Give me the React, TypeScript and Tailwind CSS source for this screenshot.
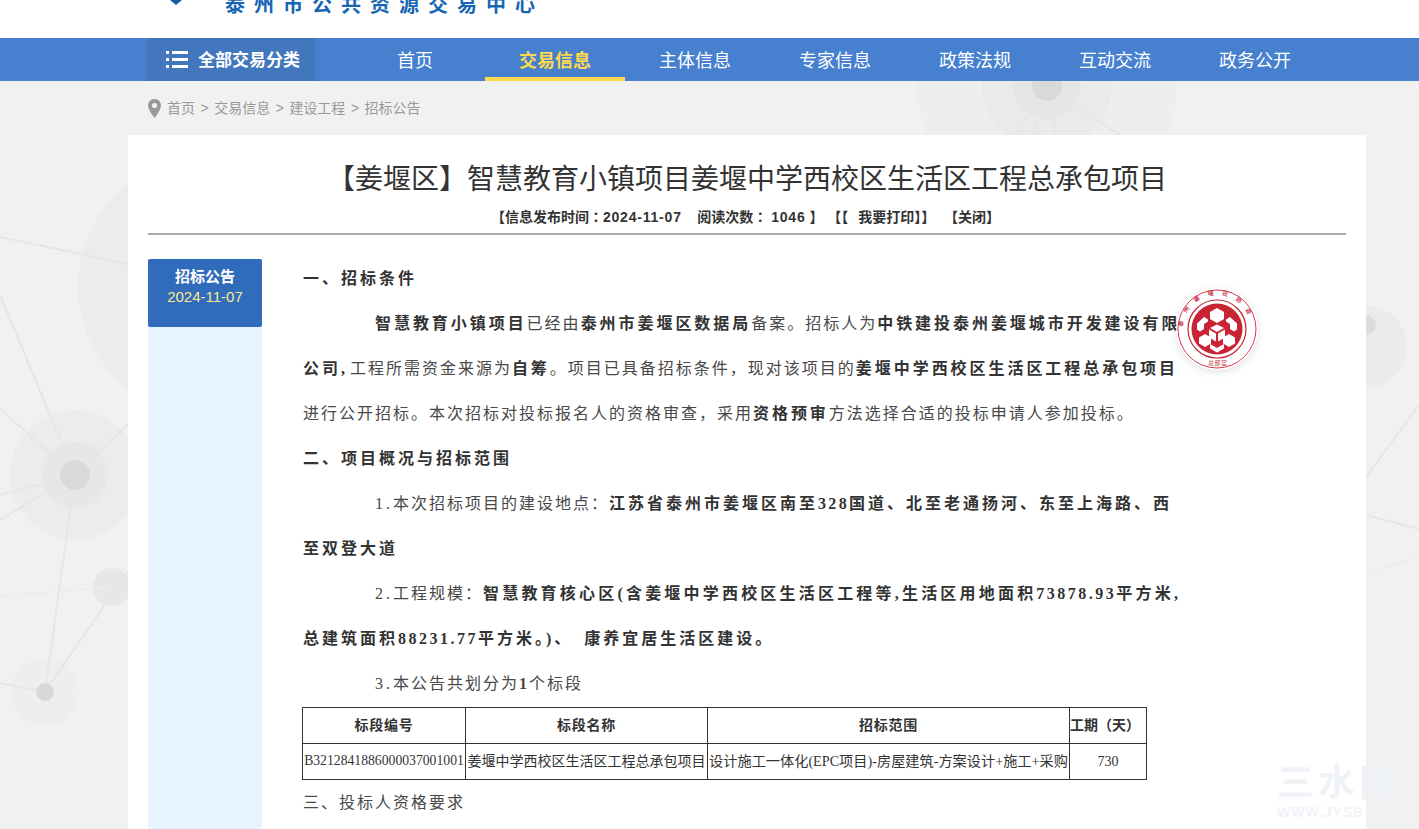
import * as React from 'react';

const font = "font-['Liberation_Sans','Noto_Sans_CJK_SC',sans-serif]";

const navItems = ['首页', '交易信息', '主体信息', '专家信息', '政策法规', '互动交流', '政务公开'];

function NetworkBg() {
  return (
    <svg className="absolute inset-0 h-full w-full" viewBox="0 0 1419 829">
      <circle cx="210" cy="286" r="132" fill="#ececec" />
      <circle cx="75" cy="475" r="65" fill="#ececec" />
      <circle cx="75" cy="475" r="33" fill="#e7e7e7" />
      <circle cx="112" cy="587" r="19" fill="#e7e7e7" />
      <circle cx="45" cy="692" r="34" fill="#eeeeee" />
      <circle cx="1047" cy="85" r="130" fill="#eeeeee" />
      <circle cx="1047" cy="85" r="65" fill="#eaeaea" />
      <circle cx="1047" cy="85" r="34" fill="#e6e6e6" />
      <circle cx="1366" cy="347" r="41" fill="#ebebeb" />
      <g stroke="#e6e6e6" strokeWidth="2" fill="none">
        <path d="M0 237 L128 264" />
        <path d="M0 295 L75 475 L128 424" />
        <path d="M0 409 L75 475 L0 495" />
        <path d="M0 520 L75 475 L45 692 L0 683" />
        <path d="M45 692 L128 571" />
        <path d="M1047 88 L1015 135" />
        <path d="M1047 88 L1033 135" />
        <path d="M1047 88 L1056 135" />
        <path d="M1047 88 L1120 135" />
        <path d="M1366 477 L1419 405" />
        <path d="M1366 515 L1419 529" />
      </g>
      <path d="M0 596 L112 587" stroke="#ececec" strokeWidth="1.500" />
      <path d="M1366 572 L1419 558" stroke="#ececec" strokeWidth="1.500" />
      <circle cx="75" cy="475" r="15" fill="#d9d9d9" />
      <circle cx="45" cy="692" r="9" fill="#d8d8d8" />
      <circle cx="1047" cy="86" r="15" fill="#d9d9d9" />
      <circle cx="1366" cy="325" r="10" fill="#dcdcdc" />
    </svg>
  );
}

function Seal() {
  return (
    <svg viewBox="0 0 82 82" className="h-[82px] w-[82px] rounded-full bg-white/50 shadow-[0_2px_8px_rgba(0,0,0,0.12)]">
      <defs>
        <path id="seal-top" d="M7 41 A34 34 0 0 1 75 41" />
      </defs>
      <circle cx="41" cy="41" r="39" fill="none" stroke="#d33a48" strokeWidth="1" />
      <text fontSize="6" fontWeight="700" fill="#c9394a" letterSpacing="8">
        <textPath href="#seal-top" startOffset="2">泰州姜堰区协会</textPath>
      </text>
      <text fontSize="6" fill="#c9394a" x="32" y="76.500" letterSpacing="0.500">总部室</text>
      <circle cx="41" cy="41" r="29" fill="#fff" stroke="#c82535" strokeWidth="1.200" />
      <circle cx="41" cy="41" r="25.500" fill="#c92433" />
      <g fill="#fff">
        <path d="M41 20l7 4v7l-7 4-7-4v-7z" />
        <path d="M28 29l4 2.500v2l-4 2.500v5l-4 2.500-3-2v-6z" />
        <path d="M54 29l-4 2.500v2l4 2.500v5l4 2.500 3-2v-6z" />
        <path d="M29 46l6 3.500v6l-6 3.500-6-3.500v-6z" />
        <path d="M53 46l6 3.500v6l-6 3.500-6-3.500v-6z" />
        <path d="M34 40l7-3.500 7 3.500-7 4z" />
        <path d="M33 41.500l7 4v8l-7-4z" />
        <path d="M49 41.500l-7 4v8l7-4z" />
        <path d="M34 56l7 4 7-4v4.500l-7 4-7-4z" />
      </g>
    </svg>
  );
}

const line = 'text-[16px] leading-[45px] whitespace-nowrap text-[#484848] tracking-[2px]';
const head = 'text-[16px] leading-[45px] whitespace-nowrap font-bold text-[#333] tracking-[3px]';
const b = 'font-bold text-[#333] tracking-[2.95px]';
const num = 'tracking-[3px]';
const serif = "font-['Liberation_Serif','Noto_Sans_CJK_SC',serif]";
const cell = 'border border-[#333]';

export default function App() {
  return (
    <div className={`relative h-[829px] w-[1419px] overflow-hidden bg-[#f1f1f1] ${font}`}>
      <NetworkBg />
      <div className="relative">
        {/* logo strip, page is scrolled a little */}
        <div className="flex h-[38px] items-start overflow-hidden bg-white">
          <svg className="ml-[168px] shrink-0" width="16" height="6" viewBox="0 0 16 6">
            <path d="M2 0h12L8 5z" fill="#1a57a6" />
          </svg>
          <span className="-mt-[5px] ml-[41px] text-[20px] leading-[20px] font-bold tracking-[9px] whitespace-nowrap text-[#1766b3]">
            泰州市公共资源交易中心
          </span>
        </div>

        <nav className="flex h-[43px] bg-[#4680cf]">
          <div className="ml-[147px] flex h-full w-[168px] items-center bg-[#4276bd] pl-[19px]">
            <svg width="22" height="19" viewBox="0 0 22 19" fill="#fff">
              <rect x="0" y="1" width="3" height="3" />
              <rect x="6" y="1" width="16" height="3" />
              <rect x="0" y="8" width="3" height="3" />
              <rect x="6" y="8" width="16" height="3" />
              <rect x="0" y="15" width="3" height="3" />
              <rect x="6" y="15" width="16" height="3" />
            </svg>
            <span className="ml-[10px] pt-[2px] text-[17px] font-bold text-white">全部交易分类</span>
          </div>
          <ul className="ml-[30px] flex">
            {navItems.map((item, i) => (
              <li
                key={item}
                className={
                  'flex h-[43px] w-[140px] items-center justify-center text-[18px] ' +
                  (i === 1
                    ? 'border-b-4 border-[#ffd84d] pt-[7px] font-bold text-[#ffd84d]'
                    : 'pt-[3px] text-white')
                }
              >
                {item}
              </li>
            ))}
          </ul>
        </nav>

        <div className="flex h-[54px] items-center pl-[148px] text-[14px] text-[#999]">
          <svg width="13" height="19" viewBox="0 0 13 19" className="mr-[6px]">
            <path d="M6.500 0C2.900 0 0 2.900 0 6.500 0 11 6.500 19 6.500 19S13 11 13 6.500C13 2.900 10.100 0 6.500 0z" fill="#999" />
            <circle cx="6.500" cy="6.500" r="2.600" fill="#f1f1f1" />
          </svg>
          <span>
            首页<span className="mx-[5.5px]">&gt;</span>交易信息<span className="mx-[5.5px]">&gt;</span>建设工程<span className="mx-[5.5px]">&gt;</span>招标公告
          </span>
        </div>

        <main className="ml-[128px] h-[700px] w-[1238px] bg-white px-5">
          <h1 className="pt-[24px] text-center text-[28px] leading-[42px] text-[#333]">
            【姜堰区】智慧教育小镇项目姜堰中学西校区生活区工程总承包项目
          </h1>
          <div className="h-[34px] border-b-2 border-[#aaa] pr-[3px] text-center text-[14px] leading-[30px] font-bold whitespace-nowrap text-[#333]">
            【信息发布时间<span className="font-['Noto_Sans_CJK_TC']">：</span>
            <span className="tracking-[0.8px]">2024-11-07</span>&nbsp;&nbsp;&nbsp;&nbsp;阅读次数
            <span className="font-['Noto_Sans_CJK_TC']">：</span> <span className="tracking-[0.8px]">1046</span> 】 【【 <span className="ml-[6px]">我要打印</span>】】<span className="ml-[5px]"> 【关闭】</span>
          </div>

          <div className="mt-6 flex gap-[41px]">
            <aside className="h-[600px] w-[114px] shrink-0 bg-[#e8f4ff]">
              <div className="flex h-[68px] flex-col items-center rounded-[2px] bg-[#316bbb] pt-2 text-[15px] leading-5">
                <span className="font-bold text-white">招标公告</span>
                <span className="text-[#ffe88f]">2024-11-07</span>
              </div>
            </aside>

            <article className={`relative -mt-[3px] w-[875px] ${serif}`}>
              <div className="absolute top-[32px] left-[873px]">
                <Seal />
              </div>
              <div className={head}>一、招标条件</div>
              <div className={`${line} pl-[72px]`}>
                <span className={b}>智慧教育小镇项目</span>已经由<span className={b}>泰州市姜堰区数据局</span>备案。招标人为<span className={b}>中铁建投泰州姜堰城市开发建设有限</span>
              </div>
              <div className={line}>
                <span className={b}>公司</span><span className="font-bold tracking-[5px] text-[#333]">,</span>工程所需资金来源为<span className={b}>自筹</span>。项目已具备招标条件，现对该项目的<span className={b}>姜堰中学西校区生活区工程总承包项目</span>
              </div>
              <div className={line}>
                进行公开招标。本次招标对投标报名人的资格审查，采用<span className={b}>资格预审</span>方法选择合适的投标申请人参加投标。
              </div>
              <div className={head}>二、项目概况与招标范围</div>
              <div className={`${line} pl-[72px]`}>
                <span className={num}>1.</span>本次招标项目的建设地点：
                <span className="font-bold tracking-[3px] text-[#333]">江苏省泰州市姜堰区南至<span className="tracking-[2.300px]">328</span>国道、北至老通扬河、东至上海路、西</span>
              </div>
              <div className={head}>至双登大道</div>
              <div className={`${line} pl-[72px]`}>
                <span className={num}>2.</span>工程规模：
                <span className="font-bold tracking-[3.200px] text-[#333]">智慧教育核心区(含姜堰中学西校区生活区工程等,生活区用地面积<span className="tracking-[2.500px]">73878.93</span>平方米,</span>
              </div>
              <div className={head}>
                总建筑面积<span className="tracking-[2.500px]">88231.77</span>平方米。)、<span className="ml-[11px]">康养宜居生活区建设。</span>
              </div>
              <div className={`${line} pl-[72px]`}>
                <span className={num}>3.</span>本公告共划分为<span className="font-bold">1</span>个标段
              </div>
              <table className="mt-px -ml-px border-collapse border border-[#333] text-[14px] text-[#333]">
                <thead>
                  <tr className="h-9 text-center">
                    <th className={`w-[163px] ${cell} font-bold tracking-[0.7px]`}>标段编号</th>
                    <th className={`w-[242px] ${cell} font-bold tracking-[0.7px]`}>标段名称</th>
                    <th className={`w-[362px] ${cell} font-bold tracking-[0.7px]`}>招标范围</th>
                    <th className={`w-[77px] ${cell} text-left font-bold whitespace-nowrap`}>工期（天）</th>
                  </tr>
                </thead>
                <tbody>
                  <tr className="h-9 text-center">
                    <td className={`${cell} text-[13.700px] whitespace-nowrap`}>B3212841886000037001001</td>
                    <td className={`${cell} whitespace-nowrap`}>姜堰中学西校区生活区工程总承包项目</td>
                    <td className={`${cell} text-[14.200px] whitespace-nowrap`}>设计施工一体化(EPC项目)-房屋建筑-方案设计+施工+采购</td>
                    <td className={cell}>730</td>
                  </tr>
                </tbody>
              </table>
              <div className="pt-[8px] text-[16px] leading-[30px] tracking-[2px] text-[#484848]">三、投标人资格要求</div>
            </article>
          </div>
        </main>
      </div>
      {/* watermark */}
      <div className="absolute top-[764px] left-[1277px] w-[120px] text-[#eff3f7]">
        <div className="text-[37px] leading-[40px] font-bold tracking-[4px] whitespace-nowrap">三水网</div>
        <div className="text-[14px] leading-4 font-bold tracking-[1px] whitespace-nowrap">WWW.JYSS</div>
      </div>
    </div>
  );
}
